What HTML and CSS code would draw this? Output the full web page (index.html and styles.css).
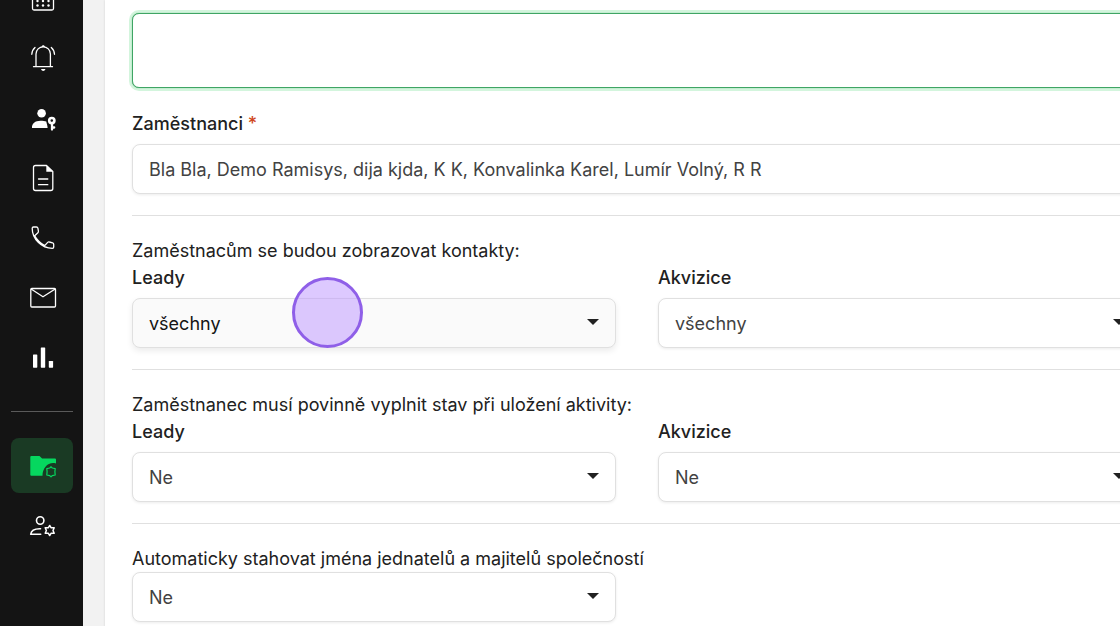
FILE: index.html
```html
<!DOCTYPE html>
<html lang="cs">
<head>
<meta charset="utf-8">
<meta name="viewport" content="width=device-width, initial-scale=1">
<title>Ramisys</title>
<link rel="stylesheet" href="styles.css">
</head>
<body>
<nav class="sidebar" aria-label="Menu">
  <a class="nav-item" href="#" aria-label="Kalendář">
    <svg class="icon" viewBox="0 0 62 55"><rect x="21.500" y="19" width="21" height="21" rx="1.500"/><g class="solid"><circle cx="26.500" cy="31" r="1.200"/><circle cx="32" cy="31" r="1.200"/><circle cx="37.500" cy="31" r="1.200"/><circle cx="26.500" cy="35.500" r="1.200"/><circle cx="32" cy="35.500" r="1.200"/><circle cx="37.500" cy="35.500" r="1.200"/></g></svg>
  </a>
  <a class="nav-item" href="#" aria-label="Upozornění">
    <svg class="icon" viewBox="0 0 62 55"><path d="M25 36.500V24a7.200 7.200 0 0 1 14.400 0v12.500M22.500 36.700h19M20.800 24.300c.1-2.600 1.200-5 3.200-6.800M43.500 24.300c-.1-2.600-1.200-5-3.200-6.800"/><path class="solid" d="M30.500 17c.3-2.200 3.200-2.200 3.500 0zM30 39h4.500c-.8 2.500-3.700 2.500-4.500 0z"/></svg>
  </a>
  <a class="nav-item" href="#" aria-label="Oprávnění">
    <svg class="icon" viewBox="0 0 62 55"><circle class="solid" cx="30.600" cy="23.200" r="4.300"/><path class="solid" d="M21 38c-.3-4.500 3.200-7.300 8.500-7.300 2.500 0 4.500.2 5.800.8.300 2.200 1.200 3.400 1.300 6.500z"/><circle cx="40.800" cy="30.600" r="2.600" stroke-width="2.600"/><path d="M41 33v6.500M41 37.500h2.200" stroke-width="2.300"/></svg>
  </a>
  <a class="nav-item" href="#" aria-label="Dokumenty">
    <svg class="icon" viewBox="0 0 62 55"><path d="M24.500 15.500h11l6.300 6V38.500a2 2 0 0 1-2 2H24.500a2 2 0 0 1-2-2v-21a2 2 0 0 1 2-2zM27.500 29h9.300M27.500 34.700h9.300"/><path class="solid" d="M35.300 15.500v6.200h6.500z"/></svg>
  </a>
  <a class="nav-item" href="#" aria-label="Hovory">
    <svg class="icon" viewBox="0 0 62 55"><path d="M22.500 17h3c.8 0 1.200.4 1.400 1.200l.5 3c.1.700 0 1.200-.5 1.600l-3.200 3c2.400 4.300 5.500 7.300 10 9.800l3-3.200c.5-.5 1-.6 1.700-.4l3.200.8c.8.200 1.100.7 1.100 1.400v2.800c0 .8-.5 1.300-1.300 1.300C30.500 38.300 21.200 29 21.200 18.300c0-.8.500-1.300 1.300-1.300z"/></svg>
  </a>
  <a class="nav-item" href="#" aria-label="Pošta">
    <svg class="icon" viewBox="0 0 62 55"><rect x="19.800" y="18.500" width="24.700" height="18.500" rx="1"/><path d="M20.500 19.200L32 26.800l11.800-7.600"/></svg>
  </a>
  <a class="nav-item" href="#" aria-label="Statistiky">
    <svg class="icon" viewBox="0 0 62 55"><g class="solid"><rect x="22" y="24.500" width="4.300" height="13.200" rx=".6"/><rect x="29.800" y="17.500" width="4.400" height="20.200" rx=".6"/><rect x="37.800" y="31" width="4.300" height="6.700" rx=".6"/></g></svg>
  </a>
  <hr class="nav-rule">
  <a class="nav-item active" href="#" aria-label="Nastavení projektů" aria-current="page">
    <svg class="icon" viewBox="0 0 62 55"><path class="solid" d="M19.300 19q0-1 1-1h8.200l2.600 2.500H44q1 0 1 1V25.500c-7.500-2-13.500 4-13.500 12.300H20.300q-1 0-1-1z"/><path d="M40 28.800l1.300 1.200 2.900.6-.3 3.200.3 3.200-2.900.6-1.300 1.200-1.300-1.200-2.900-.6.300-3.200-.3-3.200 2.900-.6z" stroke-width="1.200"/></svg>
  </a>
  <a class="nav-item" href="#" aria-label="Nastavení uživatele">
    <svg class="icon" viewBox="0 0 62 55"><circle cx="29.200" cy="22.500" r="3.700" stroke-width="1.600"/><path stroke-width="1.600" d="M29.500 30.700c-6-.2-9.300 1.800-9.800 5.600h10"/><path stroke-width="1.500" d="M38.700 27.500l1.500 2.300h3l-1.200 2.700 1.200 2.700h-3l-1.500 2.300-1.500-2.300h-3l1.200-2.700-1.200-2.700h3z"/></svg>
  </a>
</nav>
<main class="page">
  <form class="panel">
    <textarea class="message" aria-label="Poznámka"></textarea>
    <div class="field">
      <label class="label" for="employees">Zaměstnanci <span class="required">*</span></label>
      <button class="control" id="employees" type="button">Bla Bla, Demo Ramisys, dija kjda, K K, Konvalinka Karel, Lumír Volný, R R</button>
    </div>
    <hr class="rule">
    <p class="text">Zaměstnacům se budou zobrazovat kontakty:</p>
    <div class="columns">
      <div class="field">
        <label class="label" for="show-leads">Leady</label>
        <div class="select hovered"><select class="control" id="show-leads"><option>všechny</option></select><span class="caret"></span><span class="pointer"></span></div>
      </div>
      <div class="field">
        <label class="label" for="show-acq">Akvizice</label>
        <div class="select"><select class="control" id="show-acq"><option>všechny</option></select><span class="caret"></span></div>
      </div>
    </div>
    <hr class="rule">
    <p class="text">Zaměstnanec musí povinně vyplnit stav při uložení aktivity:</p>
    <div class="columns">
      <div class="field">
        <label class="label" for="state-leads">Leady</label>
        <div class="select"><select class="control" id="state-leads"><option>Ne</option><option>Ano</option></select><span class="caret"></span></div>
      </div>
      <div class="field">
        <label class="label" for="state-acq">Akvizice</label>
        <div class="select"><select class="control" id="state-acq"><option>Ne</option><option>Ano</option></select><span class="caret"></span></div>
      </div>
    </div>
    <hr class="rule">
    <label class="text" for="download">Automaticky stahovat jména jednatelů a majitelů společností</label>
    <div class="columns">
      <div class="select"><select class="control" id="download"><option>Ne</option><option>Ano</option></select><span class="caret"></span></div>
    </div>
  </form>
</main>
</body>
</html>
```
FILE: styles.css
```css
* { box-sizing: border-box; }
body {
  margin: 0;
  height: 100vh;
  display: flex;
  overflow: hidden;
  background: #f2f2f2;
  color: #212121;
  font-family: Inter, "Noto Sans", sans-serif;
  font-size: 18px;
  line-height: 27px;
}
.sidebar {
  flex: none;
  width: 83px;
  padding: 0 10px 0 11px;
  background: #141414;
  display: flex;
  flex-direction: column;
  gap: 5px;
}
.nav-item {
  flex: none;
  height: 55px;
  border-radius: 8px;
  color: #fff;
}
/* the menu is scrolled, its first entry is partly out of view */
.nav-item:first-child { margin-top: -30px; }
.nav-item.active { background: #1a3a24; color: #06d75f; }
.nav-rule {
  flex: none;
  width: 100%;
  height: 1px;
  margin: 21px 0;
  border: 0;
  background: #5a5a5a;
}
.icon {
  display: block;
  width: 62px;
  height: 55px;
  fill: none;
  stroke: currentColor;
  stroke-width: 1.3;
  stroke-linejoin: round;
  stroke-linecap: round;
}
.icon .solid { fill: currentColor; stroke: none; }
.page { flex: 1; padding-left: 22px; min-width: 0; }
.panel {
  min-width: 1064px;
  min-height: 100%;
  padding: 13px 27px;
  background: #fff;
  box-shadow: 0 0 2px #cfcfcf;
}
.message {
  display: block;
  width: 100%;
  height: 75px;
  margin-bottom: 22px;
  padding: 12px 16px;
  border: 1px solid #3fa564;
  border-radius: 7px;
  background: #fff;
  box-shadow: 0 0 1px #3fa564, 0 0 0 3px #d3f5dd;
  font: inherit;
  resize: none;
  outline: 0;
}
.field { display: flex; flex-direction: column; gap: 7px; }
.label { font-weight: 500; }
.required { color: #cf4520; }
.text { display: block; margin: 0; }
.columns {
  display: grid;
  grid-template-columns: 1fr 1fr;
  gap: 42px;
}
.control {
  display: block;
  width: 100%;
  height: 50px;
  padding: 0 16px;
  border: 1px solid #e0e0e0;
  border-radius: 8px;
  background: #fff;
  box-shadow: 0 1px 3px rgba(0, 0, 0, .08);
  color: #424242;
  font: inherit;
  text-align: left;
  appearance: none;
}
.select { position: relative; }
.hovered .control {
  background: #fafafa;
  color: #141414;
  box-shadow: 0 3px 6px rgba(0, 0, 0, .08);
}
.caret {
  position: absolute;
  top: 21px;
  right: 17px;
  border: 6px solid transparent;
  border-top-color: #212121;
  border-bottom: 0;
  pointer-events: none;
}
.pointer {
  position: absolute;
  top: -21px;
  left: 160px;
  width: 71px;
  height: 71px;
  border: 3px solid #8f5fe8;
  border-radius: 50%;
  background: rgba(188, 148, 255, .5);
  pointer-events: none;
}
.rule {
  height: 1px;
  margin: 21px 0;
  border: 0;
  background: #e0e0e0;
}
```
